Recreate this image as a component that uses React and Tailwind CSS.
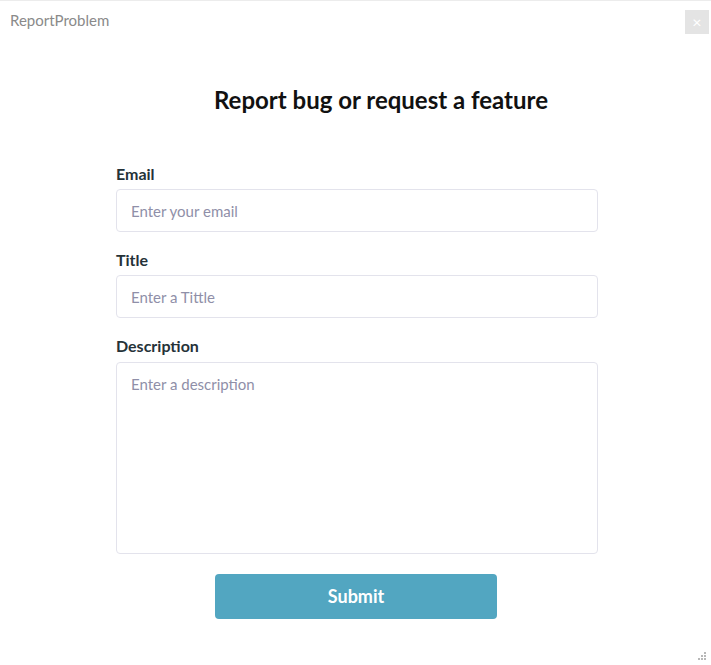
import React from "react";

function ResizeGrip() {
  return (
    <svg width="10" height="10" viewBox="0 0 10 10" className="absolute bottom-[4px] right-[4px]">
      {[
        [7, 1],
        [4, 4],
        [7, 4],
        [1, 7],
        [4, 7],
        [7, 7],
      ].map(([x, y], i) => (
        <rect key={i} x={x} y={y} width="2" height="2" fill="#b8b8b8" />
      ))}
    </svg>
  );
}

export default function App() {
  return (
    <div
      className="relative w-[711px] h-[665px] bg-white border-t border-[#ececec] overflow-hidden"
      style={{ fontFamily: "Lato, 'Open Sans', sans-serif" }}
    >
      {/* Window header */}
      <div className="flex items-start justify-between pl-[10px] pr-[2px] pt-[9px]">
        <span className="text-[15px] text-[#8a8a8a] leading-[20px]">ReportProblem</span>
        <button className="w-[24px] h-[24px] bg-[#e4e4e4] flex items-center justify-center text-white text-[16px] leading-none">
          ×
        </button>
      </div>

      {/* Form */}
      <div className="w-[482px] ml-[116px] mt-[51px]">
        <h1 className="text-[24px] font-bold text-[#111] text-center pl-[48px] leading-[30px]">
          Report bug or request a feature
        </h1>

        <div className="mt-[49px] flex flex-col">
          <label className="text-[16px] font-bold text-[#253238] leading-[20px]">Email</label>
          <input
            className="mt-[5px] h-[43px] border border-[#e3e3ec] rounded-[4px] px-[14px] text-[15px] placeholder-[#8f8fa8] outline-none"
            placeholder="Enter your email"
          />

          <label className="mt-[18px] text-[16px] font-bold text-[#253238] leading-[20px]">Title</label>
          <input
            className="mt-[5px] h-[43px] border border-[#e3e3ec] rounded-[4px] px-[14px] text-[15px] placeholder-[#8f8fa8] outline-none"
            placeholder="Enter a Tittle"
          />

          <label className="mt-[18px] text-[16px] font-bold text-[#253238] leading-[20px]">Description</label>
          <textarea
            className="mt-[6px] h-[192px] border border-[#e3e3ec] rounded-[4px] px-[14px] py-[10px] text-[15px] placeholder-[#8f8fa8] outline-none resize-none"
            placeholder="Enter a description"
          />

          <button className="mt-[20px] ml-[99px] self-start w-[282px] h-[45px] rounded-[4px] bg-[#52a6c1] text-white text-[18px] font-bold">
            Submit
          </button>
        </div>
      </div>

      <ResizeGrip />
    </div>
  );
}
